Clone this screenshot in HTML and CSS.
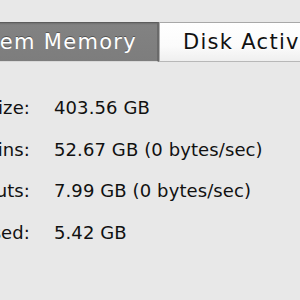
FILE: index.html
```html
<!DOCTYPE html>
<html>
<head>
<meta charset="utf-8">
<link rel="stylesheet" href="styles.css">
</head>
<body>
<div class="window">
  <div class="tabs">
    <div class="tab tab-selected">System Memory</div>
    <div class="tab tab-normal">Disk Activity</div>
  </div>
  <div class="stats">
    <div class="label">VM size:</div><div class="value">403.56 GB</div>
    <div class="label">Page ins:</div><div class="value">52.67 GB (0 bytes/sec)</div>
    <div class="label">Page outs:</div><div class="value">7.99 GB (0 bytes/sec)</div>
    <div class="label">Swap used:</div><div class="value">5.42 GB</div>
  </div>
</div>
</body>
</html>
```
FILE: styles.css
```css
html, body {
  margin: 0;
  padding: 0;
  width: 300px;
  height: 300px;
  overflow: hidden;
  background: #e8e8e8;
}
.window {
  width: 300px;
  height: 300px;
  overflow: hidden;
  font-family: "DejaVu Sans", "Verdana", sans-serif;
  color: #111;
  padding-top: 22px;
  box-sizing: border-box;
}
.tabs {
  display: flex;
  height: 40px;
  margin-left: -60px;
  white-space: nowrap;
}
.tab {
  font-size: 21px;
  letter-spacing: 1.3px;
  line-height: 38px;
  box-sizing: border-box;
  height: 40px;
  flex: none;
  overflow: hidden;
}
.tab-selected {
  width: 219px;
  padding-right: 20px;
  text-align: right;
  direction: rtl;
  unicode-bidi: plaintext;
  color: #ffffff;
  background: linear-gradient(#6f6f6f 0, #828282 2px, #7d7d7d 100%);
  border-top: 1px solid #5c5c5c;
  border-bottom: 1px solid #d8d8d8;
  border-right: 2px solid #6a6a6a;
  text-shadow: 0 -1px 0 #555;
}
.tab-normal {
  width: 200px;
  padding-left: 23px;
  background: linear-gradient(#ffffff 0, #fbfbfb 60%, #efefef 100%);
  border-top: 1px solid #a8a8a8;
  border-left: 1px solid #b0b0b0;
  border-bottom: 1px solid #b8b8b8;
  text-shadow: 0 1px 0 #fff;
}
.stats {
  display: grid;
  grid-template-columns: 130px auto;
  column-gap: 24px;
  margin-left: -100px;
  margin-top: 25px;
  font-size: 18px;
  line-height: 41.7px;
  letter-spacing: 0.1px;
  white-space: nowrap;
}
.label {
  text-align: right;
}
.value {
  text-align: left;
}
```
